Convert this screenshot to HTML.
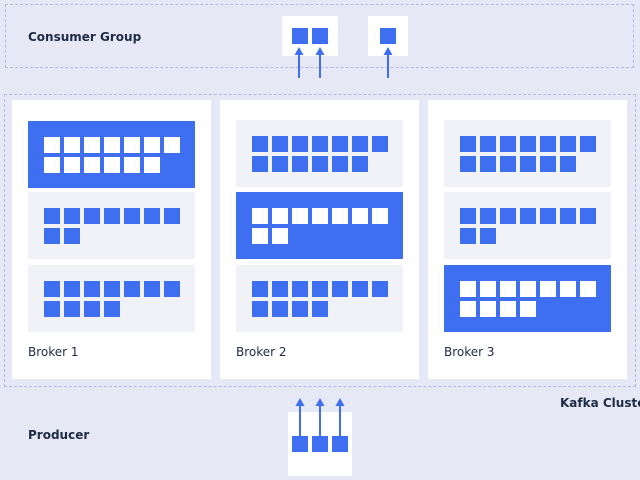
<!DOCTYPE html>
<html><head><style>
*{margin:0;padding:0;box-sizing:border-box}
body{width:640px;height:480px;background:#e6e8f5;position:relative;overflow:hidden;font-family:"Liberation Sans","DejaVu Sans",sans-serif;color:#1e2b45}
.a{position:absolute}
.dash{border:1px dashed #b4bbe8}
.w{background:#fff}
.lbl{font-size:12px;font-weight:bold;font-family:"DejaVu Sans",sans-serif}
.bl{font-size:12px;font-family:"DejaVu Sans",sans-serif}
.p{position:absolute;width:167px;height:67px;background:#f1f2f7;padding:16px 0 0 16px}
.p.h{background:#3d6ff0}
.g{display:flex;flex-wrap:wrap;width:140px}
.g i{display:block;width:16px;height:16px;margin:0 4px 4px 0;background:#3d6ff0}
.h .g i{background:#fff}
.sq{position:absolute;width:16px;height:16px;background:#3d6ff0}
</style></head><body>
<div class="a dash" style="left:5px;top:4px;width:629px;height:64px"></div>
<div class="a lbl" style="left:28px;top:30px">Consumer Group</div>
<div class="a w" style="left:282px;top:16px;width:56px;height:40px"></div>
<div class="a w" style="left:368px;top:16px;width:40px;height:40px"></div>
<div class="sq" style="left:292px;top:28px"></div>
<div class="sq" style="left:312px;top:28px"></div>
<div class="sq" style="left:380px;top:28px"></div>
<div class="a dash" style="left:4px;top:94px;width:632px;height:293px"></div>
<div class="a w" style="left:12px;top:100px;width:199px;height:279px"></div>
<div class="a w" style="left:220px;top:100px;width:199px;height:279px"></div>
<div class="a w" style="left:428px;top:100px;width:199px;height:279px"></div>

<div class="p h" style="left:28px;top:121px"><div class="g"><i></i><i></i><i></i><i></i><i></i><i></i><i></i><i></i><i></i><i></i><i></i><i></i><i></i></div></div>
<div class="p" style="left:28px;top:192px"><div class="g"><i></i><i></i><i></i><i></i><i></i><i></i><i></i><i></i><i></i></div></div>
<div class="p" style="left:28px;top:265px"><div class="g"><i></i><i></i><i></i><i></i><i></i><i></i><i></i><i></i><i></i><i></i><i></i></div></div>

<div class="p" style="left:236px;top:120px"><div class="g"><i></i><i></i><i></i><i></i><i></i><i></i><i></i><i></i><i></i><i></i><i></i><i></i><i></i></div></div>
<div class="p h" style="left:236px;top:192px"><div class="g"><i></i><i></i><i></i><i></i><i></i><i></i><i></i><i></i><i></i></div></div>
<div class="p" style="left:236px;top:265px"><div class="g"><i></i><i></i><i></i><i></i><i></i><i></i><i></i><i></i><i></i><i></i><i></i></div></div>

<div class="p" style="left:444px;top:120px"><div class="g"><i></i><i></i><i></i><i></i><i></i><i></i><i></i><i></i><i></i><i></i><i></i><i></i><i></i></div></div>
<div class="p" style="left:444px;top:192px"><div class="g"><i></i><i></i><i></i><i></i><i></i><i></i><i></i><i></i><i></i></div></div>
<div class="p h" style="left:444px;top:265px"><div class="g"><i></i><i></i><i></i><i></i><i></i><i></i><i></i><i></i><i></i><i></i><i></i></div></div>

<div class="a bl" style="left:28px;top:345px">Broker 1</div>
<div class="a bl" style="left:236px;top:345px">Broker 2</div>
<div class="a bl" style="left:444px;top:345px">Broker 3</div>
<div class="a lbl" style="left:560px;top:396px;white-space:nowrap">Kafka Cluster</div>
<div class="a lbl" style="left:28px;top:428px">Producer</div>
<div class="a w" style="left:288px;top:412px;width:64px;height:64px"></div>
<div class="sq" style="left:292px;top:436px"></div>
<div class="sq" style="left:312px;top:436px"></div>
<div class="sq" style="left:332px;top:436px"></div>
<svg class="a" style="left:0;top:0" width="640" height="480">
<g stroke="#3d6ff0" stroke-width="2" fill="#3d6ff0">
<line x1="299" y1="78" x2="299" y2="52"/><polygon points="294.5,55 299,47 303.5,55" stroke="none"/>
<line x1="320" y1="78" x2="320" y2="52"/><polygon points="315.5,55 320,47 324.5,55" stroke="none"/>
<line x1="388" y1="78" x2="388" y2="52"/><polygon points="383.5,55 388,47 392.5,55" stroke="none"/>
<line x1="300" y1="437" x2="300" y2="403"/><polygon points="295.5,406 300,398 304.5,406" stroke="none"/>
<line x1="320" y1="437" x2="320" y2="403"/><polygon points="315.5,406 320,398 324.5,406" stroke="none"/>
<line x1="340" y1="437" x2="340" y2="403"/><polygon points="335.5,406 340,398 344.5,406" stroke="none"/>
</g></svg>
</body></html>
